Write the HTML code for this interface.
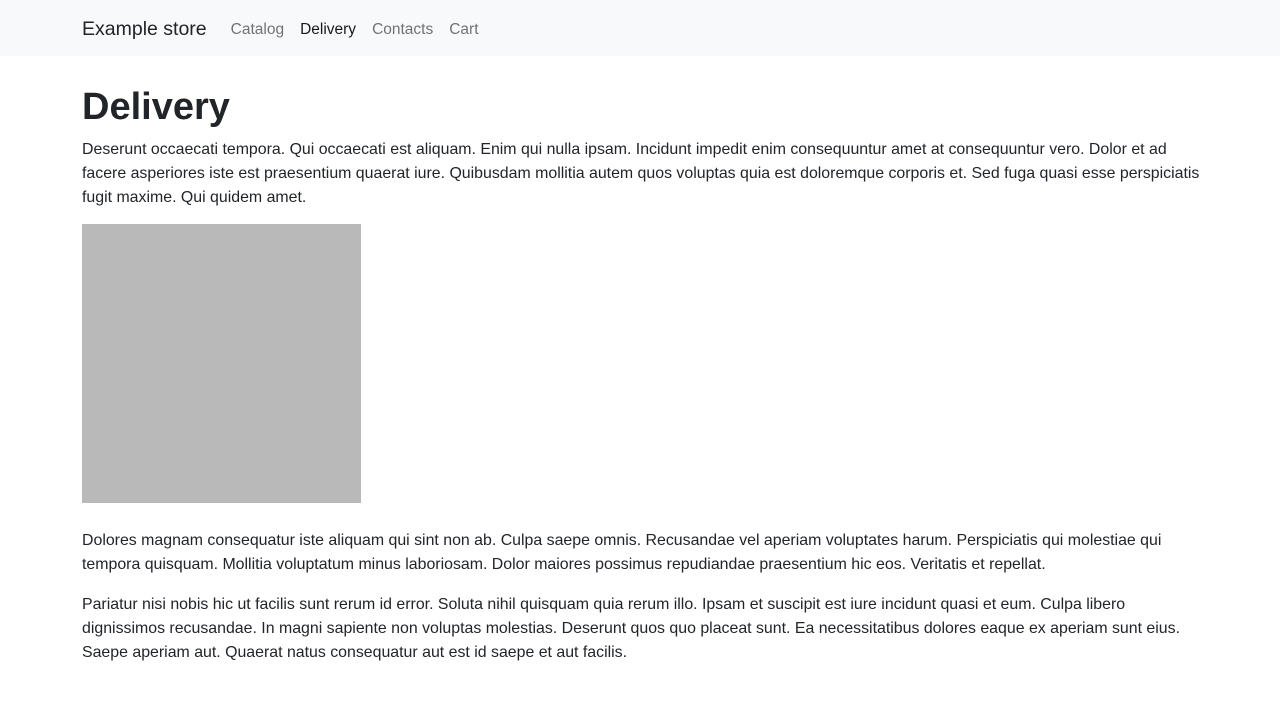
<!DOCTYPE html>
<html><head><meta charset="utf-8"><style>
*{box-sizing:border-box;margin:0;padding:0}
body{font-family:"Liberation Sans",sans-serif;color:#212529;background:#fff;width:1280px;height:720px;overflow:hidden}
.nav{height:56px;background:#f8f9fa;display:flex;align-items:center;padding-left:82px;padding-top:3px}
.brand{font-size:19.5px;color:#212529;margin-right:16px}
.nav a{font-size:15.5px;color:rgba(0,0,0,.55);padding:0 8px;text-decoration:none}
.nav a.act{color:rgba(0,0,0,.9)}
main{padding:26px 82px 0}
h1{font-size:38px;font-weight:700;line-height:50px;margin-bottom:6px}
p{font-size:15.9px;line-height:24px;margin-bottom:16px;white-space:nowrap}
.img{width:279px;height:279px;background:#b9b9b9;margin-bottom:26px;margin-top:14px}
</style></head><body>
<div class="nav"><span class="brand">Example store</span><a href="#">Catalog</a><a href="#" class="act">Delivery</a><a href="#">Contacts</a><a href="#">Cart</a></div>
<main>
<h1>Delivery</h1>
<p style="margin-bottom:0">Deserunt occaecati tempora. Qui occaecati est aliquam. Enim qui nulla ipsam. Incidunt impedit enim consequuntur amet at consequuntur vero. Dolor et ad<br>facere asperiores iste est praesentium quaerat iure. Quibusdam mollitia autem quos voluptas quia est doloremque corporis et. Sed fuga quasi esse perspiciatis<br>fugit maxime. Qui quidem amet.</p>
<div class="img"></div>
<p>Dolores magnam consequatur iste aliquam qui sint non ab. Culpa saepe omnis. Recusandae vel aperiam voluptates harum. Perspiciatis qui molestiae qui<br>tempora quisquam. Mollitia voluptatum minus laboriosam. Dolor maiores possimus repudiandae praesentium hic eos. Veritatis et repellat.</p>
<p>Pariatur nisi nobis hic ut facilis sunt rerum id error. Soluta nihil quisquam quia rerum illo. Ipsam et suscipit est iure incidunt quasi et eum. Culpa libero<br>dignissimos recusandae. In magni sapiente non voluptas molestias. Deserunt quos quo placeat sunt. Ea necessitatibus dolores eaque ex aperiam sunt eius.<br>Saepe aperiam aut. Quaerat natus consequatur aut est id saepe et aut facilis.</p>
</main>
</body></html>
